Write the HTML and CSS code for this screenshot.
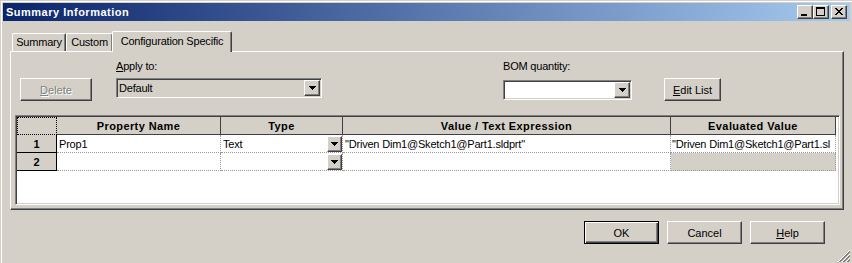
FILE: index.html
```html
<!DOCTYPE html>
<html lang="en">
<head>
  <meta charset="UTF-8">
  <title>Summary Information</title>
  <link rel="stylesheet" href="styles.css">
</head>
<body>
  <div class="window">
    <!-- Заголовок окна -->
    <div class="titlebar">
      <span class="title">Summary Information</span>
      <div class="caption-buttons">
        <button class="caption-btn">
          <svg width="6" height="2" class="glyph-min"><rect width="6" height="2"/></svg>
        </button>
        <button class="caption-btn">
          <svg width="9" height="9" class="glyph-max"><path d="M0 0h9v9H0z M1 2v6h7V2z" fill-rule="evenodd"/></svg>
        </button>
        <button class="caption-btn caption-close">
          <svg width="8" height="7" class="glyph-close"><path d="M0 0h2v1H0z M6 0h2v1H6z M1 1h2v1H1z M5 1h2v1H5z M2 2h4v1H2z M3 3h2v1H3z M2 4h4v1H2z M1 5h2v1H1z M5 5h2v1H5z M0 6h2v1H0z M6 6h2v1H6z"/></svg>
        </button>
      </div>
    </div>

    <div class="client">
      <!-- Вкладки -->
      <div class="tabs">
        <div class="tab tab-summary">Summary</div>
        <div class="tab tab-custom">Custom</div>
        <div class="tab tab-config selected">Configuration Specific</div>
      </div>

      <div class="tab-panel">
        <div class="toolbar">
          <button class="btn btn-delete" disabled><u>D</u>elete</button>

          <div class="field field-apply">
            <label class="field-label"><u>A</u>pply to:</label>
            <div class="combo combo-apply">
              <span class="combo-text">Default</span>
              <span class="drop-btn"><svg width="7" height="4"><path d="M0 0h7v1H0z M1 1h5v1H1z M2 2h3v1H2z M3 3h1v1H3z"/></svg></span>
            </div>
          </div>

          <div class="field field-bom">
            <label class="field-label">BOM quantity:</label>
            <div class="combo combo-bom">
              <span class="combo-text"></span>
              <span class="drop-btn"><svg width="7" height="4"><path d="M0 0h7v1H0z M1 1h5v1H1z M2 2h3v1H2z M3 3h1v1H3z"/></svg></span>
            </div>
          </div>

          <button class="btn btn-edit"><u>E</u>dit List</button>
        </div>

        <!-- Таблица свойств -->
        <div class="grid">
          <div class="grid-rows">
            <div class="cell corner"></div>
            <div class="cell head">Property Name</div>
            <div class="cell head">Type</div>
            <div class="cell head">Value / Text Expression</div>
            <div class="cell head">Evaluated Value</div>

            <div class="cell row-head">1</div>
            <div class="cell data">Prop1</div>
            <div class="cell data type-cell">Text<span class="drop-btn cell-drop"><svg width="7" height="4"><path d="M0 0h7v1H0z M1 1h5v1H1z M2 2h3v1H2z M3 3h1v1H3z"/></svg></span></div>
            <div class="cell data">"Driven Dim1@Sketch1@Part1.sldprt"</div>
            <div class="cell data evaluated">"Driven Dim1@Sketch1@Part1.sl</div>

            <div class="cell row-head">2</div>
            <div class="cell data"></div>
            <div class="cell data type-cell"><span class="drop-btn cell-drop"><svg width="7" height="4"><path d="M0 0h7v1H0z M1 1h5v1H1z M2 2h3v1H2z M3 3h1v1H3z"/></svg></span></div>
            <div class="cell data"></div>
            <div class="cell data evaluated readonly"></div>
          </div>
        </div>
      </div>

      <!-- Кнопки диалога -->
      <div class="dialog-buttons">
        <button class="btn btn-dialog default">OK</button>
        <button class="btn btn-dialog">Cancel</button>
        <button class="btn btn-dialog"><u>H</u>elp</button>
      </div>
    </div>

    <div class="size-grip">
      <svg width="12" height="12">
        <g stroke-width="1">
          <line x1="12" y1="0" x2="0" y2="12" stroke="#fff"/>
          <line x1="12" y1="1" x2="1" y2="12" stroke="#808080"/>
          <line x1="12" y1="2" x2="2" y2="12" stroke="#808080"/>
          <line x1="12" y1="4" x2="4" y2="12" stroke="#fff"/>
          <line x1="12" y1="5" x2="5" y2="12" stroke="#808080"/>
          <line x1="12" y1="6" x2="6" y2="12" stroke="#808080"/>
          <line x1="12" y1="8" x2="8" y2="12" stroke="#fff"/>
          <line x1="12" y1="9" x2="9" y2="12" stroke="#808080"/>
          <line x1="12" y1="10" x2="10" y2="12" stroke="#808080"/>
        </g>
      </svg>
    </div>
  </div>
</body>
</html>
```

FILE: styles.css
```css
/* Основа страницы: серый фон диалога и мелкий шрифт */
body {
  margin: 0;
  background: #d4d0c8;
  font-family: "Liberation Sans", Arial, sans-serif;
  font-size: 11px;
  letter-spacing: -0.2px;
  color: #000;
}

/* Окно целиком */
.window {
  position: relative;
  width: 852px;
  height: 263px;
  box-sizing: border-box;
  padding: 3px 2px 0 3px;
  box-shadow: inset 1px 1px #d4d0c8, inset 2px 2px #fff;
}

/* Полоса заголовка с градиентом */
.titlebar {
  display: flex;
  align-items: center;
  justify-content: space-between;
  height: 18px;
  padding: 0 3px;
  background: linear-gradient(to right, #0a246a, #a6caf0);
}

.title {
  color: #fff;
  font-weight: bold;
  letter-spacing: 0.5px;
}

.caption-buttons {
  display: flex;
}

/* Общая выпуклая рамка кнопок */
.caption-btn,
.btn,
.drop-btn {
  background: #d4d0c8;
  border: 1px solid;
  border-color: #fff #404040 #404040 #fff;
  box-shadow: inset -1px -1px #808080;
  box-sizing: border-box;
  padding: 0;
  font: inherit;
  color: #000;
}

.caption-btn {
  position: relative;
  width: 16px;
  height: 14px;
}

.caption-close {
  margin-left: 2px;
}

.caption-btn svg {
  position: absolute;
  display: block;
}

.glyph-min {
  left: 3px;
  top: 8px;
}

.glyph-max {
  left: 2px;
  top: 1px;
}

.glyph-close {
  left: 3px;
  top: 2px;
}

/* Клиентская часть окна */
.client {
  padding: 0 6px 0 7px;
}

/* Вкладки */
.tabs {
  display: flex;
  align-items: flex-end;
  height: 20px;
  margin-top: 10px;
  padding-left: 2px;
}

.tab {
  height: 18px;
  line-height: 17px;
  text-align: center;
  box-sizing: border-box;
  border-top: 1px solid #fff;
  border-left: 1px solid #fff;
  border-right: 1px solid #404040;
  box-shadow: inset -1px 0 #808080;
  border-radius: 2px 2px 0 0;
}

.tab-summary {
  width: 54px;
}

.tab-custom {
  width: 47px;
}

.tab.selected {
  position: relative;
  z-index: 1;
  width: 120px;
  height: 21px;
  line-height: 18px;
  margin-left: -1px;
  margin-bottom: -1px;
  background: #d4d0c8;
}

/* Панель вкладки */
.tab-panel {
  height: 159px;
  box-sizing: border-box;
  border: 1px solid;
  border-color: #fff #404040 #404040 #fff;
  box-shadow: inset -1px -1px #808080;
  padding: 8px 0 0 4px;
}

.toolbar {
  display: flex;
  align-items: flex-start;
  padding-left: 5px;
}

.btn {
  height: 23px;
  text-align: center;
}

.btn-delete {
  width: 72px;
  margin-top: 18px;
  color: #808080;
  text-shadow: 1px 1px #fff;
}

.field {
  display: flex;
  flex-direction: column;
}

.field-label {
  line-height: 13px;
}

.field-apply {
  margin-left: 24px;
}

.field-apply .field-label {
  margin-bottom: 5px;
}

.field-bom {
  margin-left: 181px;
}

.field-bom .field-label {
  margin-bottom: 7px;
}

/* Выпадающие списки */
.combo {
  display: flex;
  height: 20px;
  box-sizing: border-box;
  padding: 1px;
  background: #fff;
  border: 1px solid;
  border-color: #808080 #fff #fff #808080;
  box-shadow: inset 1px 1px #404040, inset -1px -1px #d4d0c8;
}

.combo-apply {
  width: 206px;
  background: #d4d0c8;
}

.combo-bom {
  width: 129px;
}

.combo-text {
  flex: 1;
  line-height: 16px;
  padding-left: 1px;
}

.drop-btn {
  display: flex;
  align-items: center;
  justify-content: center;
  width: 16px;
  height: 16px;
}

.btn-edit {
  width: 57px;
  margin-top: 18px;
  margin-left: 32px;
}

/* Сетка свойств */
.grid {
  width: 825px;
  height: 90px;
  margin-top: 14px;
  box-sizing: border-box;
  padding: 1px;
  background: #fff;
  border: 1px solid;
  border-color: #808080 #fff #fff #808080;
  box-shadow: inset 1px 1px #404040, inset -1px -1px #d4d0c8;
}

.grid-rows {
  display: grid;
  grid-template-columns: 40px 164px 122px 328px 165px;
  grid-auto-rows: 18px;
}

.cell {
  display: flex;
  align-items: center;
  box-sizing: border-box;
  overflow: hidden;
  white-space: nowrap;
}

.corner {
  background: #d4d0c8;
  border: 1px dotted #000;
}

.head {
  justify-content: center;
  background: #d4d0c8;
  font-weight: bold;
  letter-spacing: 0.4px;
  border-right: 1px solid #404040;
  border-bottom: 1px solid #404040;
}

.row-head {
  justify-content: center;
  background: #d4d0c8;
  font-weight: bold;
  border-right: 1px solid #000;
  border-bottom: 1px solid #000;
}

.data {
  padding-left: 2px;
  border-right: 1px dotted #999;
  border-bottom: 1px dotted #999;
}

.evaluated {
  padding-left: 1px;
}

.readonly {
  background: #d4d0c8;
}

.type-cell {
  padding-right: 0;
}

.cell-drop {
  width: 15px;
  margin-left: auto;
}

/* Кнопки OK / Cancel / Help */
.dialog-buttons {
  display: flex;
  justify-content: flex-end;
  gap: 8px;
  margin-top: 11px;
  padding-right: 19px;
}

.btn-dialog {
  width: 75px;
}

.btn-dialog.default {
  border-color: #000;
  box-shadow: inset 1px 1px #fff, inset -1px -1px #404040, inset -2px -2px #808080;
}

/* Уголок для изменения размера */
.size-grip {
  position: absolute;
  right: 2px;
  bottom: 1px;
  width: 12px;
  height: 12px;
}

.size-grip svg {
  display: block;
}
```
